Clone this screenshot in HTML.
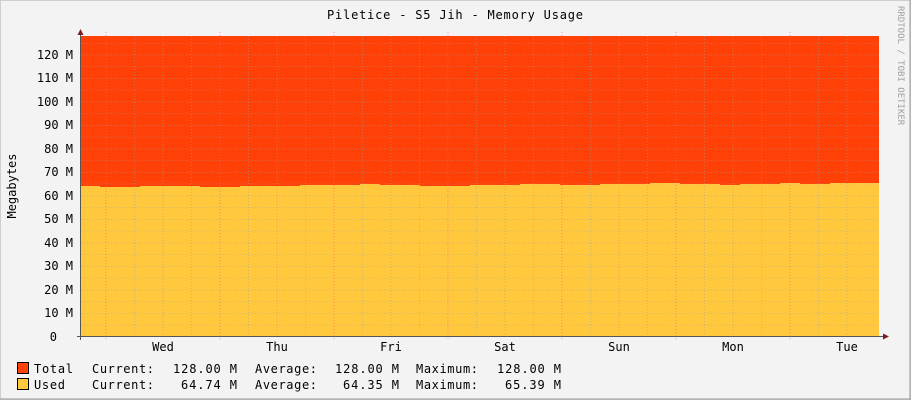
<!DOCTYPE html>
<html><head><meta charset="utf-8"><style>
html,body{margin:0;padding:0;background:#f3f3f3;}
svg{display:block;}
text{font-family:"DejaVu Sans Mono","Liberation Mono",monospace;font-size:12px;fill:#000;}
</style></head><body>
<svg width="911" height="400" xmlns="http://www.w3.org/2000/svg">
<rect x="0" y="0" width="911" height="400" fill="#f3f3f3"/>
<rect x="0.5" y="0.5" width="910" height="399" fill="none" stroke="#cfcfcf"/>
<line x1="0" y1="399" x2="911" y2="399" stroke="#9a9a9a"/>
<line x1="910" y1="0" x2="910" y2="400" stroke="#9a9a9a"/>
<text x="327" y="19" textLength="256">Piletice - S5 Jih - Memory Usage</text>
<text transform="translate(898,6) rotate(90)" style="font-size:9px;fill:#a0a0a0">RRDTOOL / TOBI OETIKER</text>
<text transform="translate(16,186) rotate(-90)" text-anchor="middle">Megabytes</text>
<rect x="81" y="36" width="798" height="300" fill="#ff4107"/>
<polygon fill="#ffc83d" points="81,186 100,186 100,187 140,187 140,186 200,186 200,187 240,187 240,186 300,186 300,185 360,185 360,184 380,184 380,185 420,185 420,186 470,186 470,185 520,185 520,184 560,184 560,185 600,185 600,184 650,184 650,183 680,183 680,184 720,184 720,185 740,185 740,184 780,184 780,183 800,183 800,184 830,184 830,183 879,183 879,336 81,336"/>
<g stroke="#a0a0a0" stroke-opacity="0.45" stroke-dasharray="1,2">
<line x1="81" y1="43.5" x2="879" y2="43.5"/>
<line x1="81" y1="66.5" x2="879" y2="66.5"/>
<line x1="81" y1="90" x2="879" y2="90"/>
<line x1="81" y1="113.5" x2="879" y2="113.5"/>
<line x1="81" y1="137" x2="879" y2="137"/>
<line x1="81" y1="160.5" x2="879" y2="160.5"/>
<line x1="81" y1="184" x2="879" y2="184"/>
<line x1="81" y1="207.5" x2="879" y2="207.5"/>
<line x1="81" y1="231" x2="879" y2="231"/>
<line x1="81" y1="254.5" x2="879" y2="254.5"/>
<line x1="81" y1="278" x2="879" y2="278"/>
<line x1="81" y1="301.5" x2="879" y2="301.5"/>
<line x1="81" y1="325" x2="879" y2="325"/>
</g>
<g stroke="#a0a0a0" stroke-opacity="0.5" stroke-dasharray="1,2">
<line x1="81" y1="55" x2="879" y2="55"/><line x1="81" y1="78.5" x2="879" y2="78.5"/>
<line x1="81" y1="102" x2="879" y2="102"/><line x1="81" y1="125.5" x2="879" y2="125.5"/>
<line x1="81" y1="149" x2="879" y2="149"/><line x1="81" y1="172.5" x2="879" y2="172.5"/>
<line x1="81" y1="196" x2="879" y2="196"/><line x1="81" y1="219.5" x2="879" y2="219.5"/>
<line x1="81" y1="243" x2="879" y2="243"/><line x1="81" y1="266.5" x2="879" y2="266.5"/>
<line x1="81" y1="290" x2="879" y2="290"/><line x1="81" y1="313.5" x2="879" y2="313.5"/>
</g>
<g stroke="#a0a0a0" stroke-opacity="0.5" stroke-dasharray="1,2">
<line x1="134.5" y1="36" x2="134.5" y2="336"/><line x1="163" y1="36" x2="163" y2="336"/><line x1="191.5" y1="36" x2="191.5" y2="336"/>
<line x1="248.5" y1="36" x2="248.5" y2="336"/><line x1="277" y1="36" x2="277" y2="336"/><line x1="305.5" y1="36" x2="305.5" y2="336"/>
<line x1="362.5" y1="36" x2="362.5" y2="336"/><line x1="391" y1="36" x2="391" y2="336"/><line x1="419.5" y1="36" x2="419.5" y2="336"/>
<line x1="476.5" y1="36" x2="476.5" y2="336"/><line x1="505" y1="36" x2="505" y2="336"/><line x1="533.5" y1="36" x2="533.5" y2="336"/>
<line x1="590.5" y1="36" x2="590.5" y2="336"/><line x1="619" y1="36" x2="619" y2="336"/><line x1="647.5" y1="36" x2="647.5" y2="336"/>
<line x1="704.5" y1="36" x2="704.5" y2="336"/><line x1="733" y1="36" x2="733" y2="336"/><line x1="761.5" y1="36" x2="761.5" y2="336"/>
<line x1="818.5" y1="36" x2="818.5" y2="336"/><line x1="847" y1="36" x2="847" y2="336"/>
</g>
<g stroke="#ff6060" stroke-opacity="0.6" stroke-dasharray="1,2">
<line x1="106" y1="32" x2="106" y2="340"/><line x1="220" y1="32" x2="220" y2="340"/><line x1="334" y1="32" x2="334" y2="340"/>
<line x1="448" y1="32" x2="448" y2="340"/><line x1="562" y1="32" x2="562" y2="340"/><line x1="676" y1="32" x2="676" y2="340"/><line x1="790" y1="32" x2="790" y2="340"/>
</g>
<line x1="80.5" y1="34" x2="80.5" y2="340" stroke="#555"/>
<line x1="77" y1="336.5" x2="884" y2="336.5" stroke="#555"/>
<polygon points="80.5,29 77.5,35 83.5,35" fill="#7a1f1f"/>
<polygon points="889,336.5 883,333.5 883,339.5" fill="#7a1f1f"/>
<g text-anchor="end">
<text x="73" y="59">120 M</text><text x="73" y="82">110 M</text><text x="73" y="106">100 M</text>
<text x="73" y="129">90 M</text><text x="73" y="153">80 M</text><text x="73" y="176">70 M</text>
<text x="73" y="200">60 M</text><text x="73" y="223">50 M</text><text x="73" y="247">40 M</text>
<text x="73" y="270">30 M</text><text x="73" y="294">20 M</text><text x="73" y="317">10 M</text>
<text x="57" y="341">0</text>
</g>
<g text-anchor="middle">
<text x="163" y="351">Wed</text><text x="277" y="351">Thu</text><text x="391" y="351">Fri</text>
<text x="505" y="351">Sat</text><text x="619" y="351">Sun</text><text x="733" y="351">Mon</text><text x="847" y="351">Tue</text>
</g>
<rect x="17.5" y="362.5" width="11" height="11" fill="#ff4107" stroke="#000"/>
<rect x="17.5" y="378.5" width="11" height="11" fill="#ffc83d" stroke="#000"/>
<text x="34" y="373" textLength="39">Total</text>
<text x="34" y="389" textLength="31">Used</text>
<text x="92" y="373" textLength="62">Current:</text>
<text x="92" y="389" textLength="62">Current:</text>
<text x="255" y="373" textLength="62">Average:</text>
<text x="255" y="389" textLength="62">Average:</text>
<text x="416" y="373" textLength="62">Maximum:</text>
<text x="416" y="389" textLength="62">Maximum:</text>
<text x="173" y="373" textLength="64">128.00 M</text>
<text x="181" y="389" textLength="56">64.74 M</text>
<text x="335" y="373" textLength="64">128.00 M</text>
<text x="343" y="389" textLength="56">64.35 M</text>
<text x="497" y="373" textLength="64">128.00 M</text>
<text x="505" y="389" textLength="56">65.39 M</text>
</svg>
</body></html>
